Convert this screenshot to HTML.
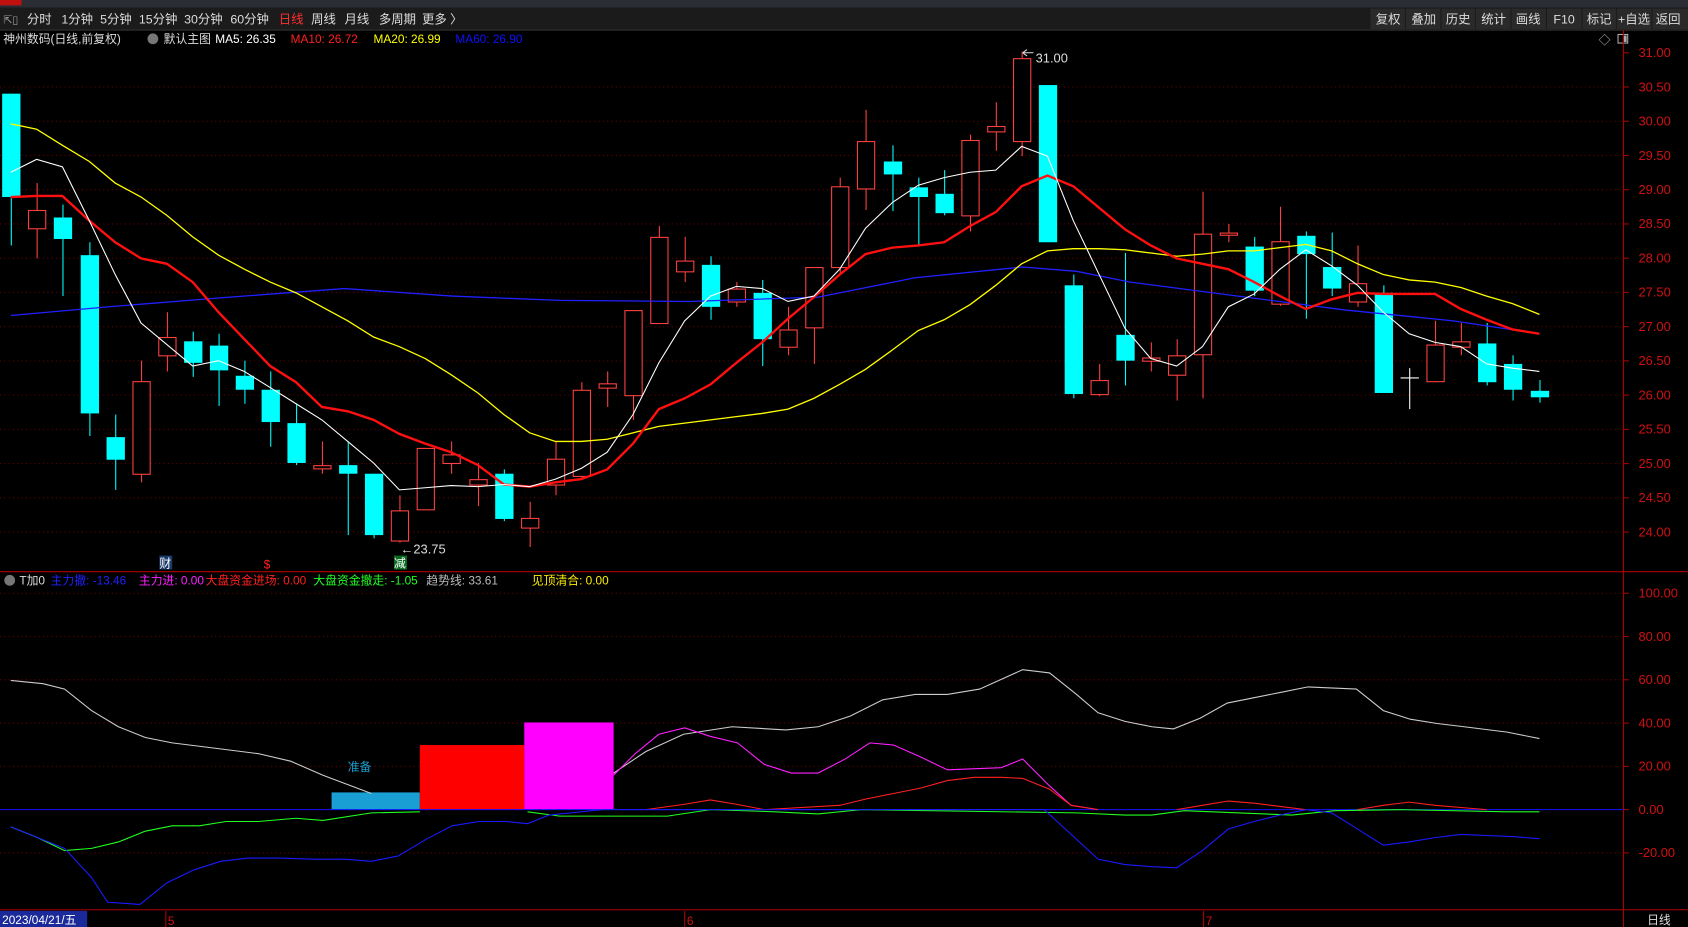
<!DOCTYPE html>
<html><head><meta charset="utf-8"><style>
html,body{margin:0;padding:0;background:#000;overflow:hidden}
svg{display:block}
text{font-family:"Liberation Sans","Noto Sans CJK SC",sans-serif}
</style></head><body>
<svg id="s" width="1688" height="927" viewBox="0 0 1568 861" preserveAspectRatio="none" xmlns="http://www.w3.org/2000/svg">
<rect width="1568" height="861" fill="#000"/>
<rect width="1568" height="7" fill="#2a2d33"/>
<rect x="0" y="0" width="20" height="5" fill="#c01010"/>
<rect y="7" width="1568" height="21" fill="#1b1b1b"/>
<line x1="0" y1="28" x2="1568" y2="28" stroke="#333" />
<g font-size="11.5" fill="#ddd">
<text x="3" y="22" fill="#999" font-size="10">⇱▯</text>
<text x="25" y="22">分时</text><text x="57" y="22">1分钟</text><text x="93" y="22">5分钟</text><text x="129" y="22">15分钟</text><text x="171" y="22">30分钟</text><text x="214" y="22">60分钟</text>
<text x="259" y="22" fill="#ff3030">日线</text><text x="289" y="22">周线</text><text x="320" y="22">月线</text><text x="352" y="22">多周期</text><text x="392" y="22">更多 〉</text>
</g>
<g font-size="11.5" fill="#ddd">
<rect x="1273" y="8" width="32" height="19" fill="#2a2a2a"/><text x="1278" y="22">复权</text>
<rect x="1306" y="8" width="32" height="19" fill="#2a2a2a"/><text x="1311" y="22">叠加</text>
<rect x="1339" y="8" width="31" height="19" fill="#2a2a2a"/><text x="1343" y="22">历史</text>
<rect x="1371" y="8" width="32" height="19" fill="#2a2a2a"/><text x="1376" y="22">统计</text>
<rect x="1404" y="8" width="32" height="19" fill="#2a2a2a"/><text x="1408" y="22">画线</text>
<rect x="1437" y="8" width="32" height="19" fill="#2a2a2a"/><text x="1443" y="22">F10</text>
<rect x="1470" y="8" width="31" height="19" fill="#2a2a2a"/><text x="1474" y="22">标记</text>
<rect x="1502" y="8" width="32" height="19" fill="#2a2a2a"/><text x="1503" y="22">+自选</text>
<rect x="1535" y="8" width="33" height="19" fill="#2a2a2a"/><text x="1538" y="22">返回</text>
</g>
<g font-size="11">
<text x="3" y="40" fill="#ddd">神州数码(日线,前复权)</text>
<circle cx="142" cy="36" r="5" fill="#777"/><text x="152" y="40" fill="#ddd">默认主图</text>
<text x="200" y="40" fill="#fff">MA5: 26.35</text>
<text x="270" y="40" fill="#ff2020">MA10: 26.72</text>
<text x="347" y="40" fill="#ffff00">MA20: 26.99</text>
<text x="423" y="40" fill="#1010ff">MA60: 26.90</text>
<text x="1485" y="41" fill="#bbb" font-size="11">◇</text>
<rect x="1503" y="32" width="9" height="8" fill="none" stroke="#aaa"/><rect x="1508" y="33" width="3" height="6" fill="#aaa"/>
</g>
<g id="grid"></g>
<line x1="1508" y1="28" x2="1508" y2="845" stroke="#b00000"/>
<line x1="0" y1="531" x2="1568" y2="531" stroke="#b00000"/>
<line x1="0" y1="845" x2="1568" y2="845" stroke="#b00000"/>
<line x1="1508" y1="845" x2="1508" y2="861" stroke="#b00000"/>
<g id="ax" font-size="12" fill="#d01010"></g>
<g id="ch"></g>
<text x="962" y="58" fill="#ddd" font-size="12">31.00</text>
<path d="M950 49 l4 -3 M950 49 l4 3 M950 49 H960" stroke="#ddd" fill="none"/>
<text x="372" y="514" fill="#ddd" font-size="12">←23.75</text>
<rect x="148" y="516" width="12" height="13" fill="#1a3a6a"/><text x="148" y="527" fill="#fff" font-size="11">财</text>
<text x="245" y="528" fill="#ff2020" font-size="11">$</text>
<rect x="366" y="516" width="12" height="13" fill="#0a6a20"/><text x="366" y="527" fill="#fff" font-size="11">减</text>
<g font-size="11">
<circle cx="9" cy="539" r="5" fill="#777"/>
<text x="18" y="543" fill="#ddd">T加0</text>
<text x="47" y="543" fill="#2020ff">主力撤: -13.46</text>
<text x="129" y="543" fill="#ff20ff">主力进: 0.00</text>
<text x="191" y="543" fill="#ff2020">大盘资金进场: 0.00</text>
<text x="291" y="543" fill="#20ff20">大盘资金撤走: -1.05</text>
<text x="396" y="543" fill="#bbb">趋势线: 33.61</text>
<text x="494" y="543" fill="#ffee00">见顶清合: 0.00</text>
</g>
<rect x="308" y="736" width="82" height="16" fill="#1a9fd4"/>
<rect x="390" y="692" width="97" height="60" fill="#ff0000"/>
<rect x="487" y="671" width="83" height="81" fill="#ff00ff"/>
<text x="323" y="716" fill="#1a9fd4" font-size="11">准备</text>
<line x1="0" y1="752" x2="1508" y2="752" stroke="#1010ff"/>
<g id="ind"></g>
<rect x="0" y="846" width="81" height="15" fill="#1a2a9a"/>
<text x="2" y="858" fill="#fff" font-size="11">2023/04/21/五</text>
<line x1="154" y1="846" x2="154" y2="861" stroke="#b00000"/><text x="156" y="859" fill="#d01010" font-size="11">5</text>
<line x1="636" y1="846" x2="636" y2="861" stroke="#b00000"/><text x="638" y="859" fill="#d01010" font-size="11">6</text>
<line x1="1118" y1="846" x2="1118" y2="861" stroke="#b00000"/><text x="1120" y="859" fill="#d01010" font-size="11">7</text>
<text x="1530" y="858" fill="#ddd" font-size="11">日线</text>
</svg>
<script>
var NS="http://www.w3.org/2000/svg";
function el(p,t,a){var e=document.createElementNS(NS,t);for(var k in a)e.setAttribute(k,a[k]);document.getElementById(p).appendChild(e);return e;}
for(var k=0;k<=14;k++){var y=49+k*31.8;var p=(31-k*0.5).toFixed(2);
 if(k>0)el('grid','line',{x1:0,y1:y,x2:1508,y2:y,stroke:'#6a0000','stroke-dasharray':'1 3'});
 el('ax','line',{x1:1508,y1:y,x2:1513,y2:y,stroke:'#b00000'});
 var t=el('ax','text',{x:1522,y:y+4});t.textContent=p;}
for(var k=0;k<=6;k++){var y=551+k*40.2;var v=(100-k*20).toFixed(2);
 el('grid','line',{x1:0,y1:y,x2:1508,y2:y,stroke:'#6a0000','stroke-dasharray':'1 3'});
 el('ax','line',{x1:1508,y1:y,x2:1513,y2:y,stroke:'#b00000'});
 var t=el('ax','text',{x:1522,y:y+4});t.textContent=v;}
var C=[[10,87,183,87,228,'c'],[34,195,212,170,240,'r'],[58,202,222,190,275,'c'],[83,237,384,225,405,'c'],[107,406,427,385,455,'c'],[131,354,440,335,448,'r'],[155,313,330,290,345,'r'],[179,317,337,308,350,'c'],[203,321,344,310,377,'c'],[227,349,362,335,375,'c'],[251,362,392,345,415,'c'],[275,393,430,375,432,'c'],[299,432,435,410,440,'r'],[323,432,440,410,497,'c'],[347,440,497,440,500,'c'],[371,474,502,460,504,'r'],[395,416,473,416,473,'r'],[419,422,430,410,440,'r'],[444,445,450,430,470,'r'],[468,440,482,436,484,'c'],[492,481,490,466,508,'r'],[516,426,450,410,460,'r'],[540,362,442,355,445,'r'],[564,356,360,345,378,'r'],[588,288,367,288,390,'r'],[612,220,300,210,300,'r'],[636,242,252,220,262,'r'],[660,246,285,238,297,'c'],[684,268,280,262,285,'r'],[708,272,315,260,340,'c'],[732,306,322,285,330,'r'],[756,248,304,248,338,'r'],[780,173,248,165,255,'r'],[804,131,175,102,195,'r'],[829,150,162,135,196,'c'],[853,174,183,165,228,'c'],[877,180,198,158,200,'c'],[901,130,200,125,215,'r'],[925,117,122,95,140,'r'],[949,54,131,48,145,'r'],[973,79,225,79,225,'c'],[997,265,366,255,370,'c'],[1021,353,366,338,368,'r'],[1045,311,335,235,358,'c'],[1069,332,335,318,345,'r'],[1093,330,348,315,372,'r'],[1117,217,329,178,370,'r'],[1141,216,218,208,225,'r'],[1165,229,270,220,275,'c'],[1189,224,282,192,284,'r'],[1213,219,236,215,296,'c'],[1237,248,268,216,275,'c'],[1261,263,280,228,285,'r'],[1285,272,365,265,365,'c'],[1309,351,352,342,380,'w'],[1333,320,354,298,355,'r'],[1357,317,322,300,330,'r'],[1381,319,355,300,358,'c'],[1405,338,362,330,372,'c'],[1430,363,369,353,374,'c']];
C.forEach(function(c){var x=c[0],col=c[5]=='c'?'#00ffff':(c[5]=='w'?'#ffffff':'#ff4040');
 el('ch','line',{x1:x+.5,y1:c[3],x2:x+.5,y2:c[4],stroke:col});
 if(c[5]=='c')el('ch','rect',{x:x-8,y:c[1],width:17,height:Math.max(1,c[2]-c[1]),fill:col});
 else if(c[5]=='w')el('ch','line',{x1:x-8,y1:c[1],x2:x+9,y2:c[1],stroke:col});
 else el('ch','rect',{x:x-7.5,y:c[1]+.5,width:16,height:Math.max(1,c[2]-c[1]),fill:'#000',stroke:col});});
function pl(g,pts,col,w){el(g,'polyline',{points:pts.map(function(p){return p.join(',')}).join(' '),fill:'none',stroke:col,'stroke-width':w});}
var xs=C.map(function(c){return c[0];});
function Z(ys){return ys.map(function(y,i){return [xs[i],y];});}
pl('ch',[[10,293],[100,285],[200,277],[320,268],[420,275],[520,279],[640,280],[760,276],[850,258],[950,248],[1000,252],[1050,262],[1150,275],[1250,288],[1350,298],[1430,310]],'#2020ff',1.2);
pl('ch',Z([115,120,135,150,170,183,200,220,237,250,262,272,285,298,313,322,333,348,365,385,402,410,410,408,402,396,393,390,387,384,380,370,357,343,325,307,297,283,265,245,233,231,231,232,235,238,236,233,233,230,227,233,245,255,260,262,267,275,282,292,303]),'#ffff00',1.2);
pl('ch',Z([183,182,182,205,225,240,245,262,290,315,340,355,378,382,390,403,412,420,432,450,452,448,445,436,412,380,370,357,337,318,296,276,255,236,230,228,225,210,197,173,163,173,193,213,228,240,245,250,262,275,287,278,272,273,273,273,287,297,306,310,320]),'#ff1010',2.2);
pl('ch',Z([160,148,155,205,255,300,320,340,335,345,360,375,390,410,430,455,453,451,452,450,452,445,435,420,385,337,298,275,266,268,280,275,250,212,188,172,165,160,158,136,145,205,255,305,333,340,322,285,273,250,232,247,265,290,310,318,322,338,342,345,345]),'#ffffff',1);
pl('ind',[[10,632],[40,635],[60,640],[85,660],[110,675],[135,685],[160,690],[200,695],[240,700],[270,707],[300,720],[345,737]],'#cccccc',1);
pl('ind',[[570,718],[600,698],[635,682],[680,675],[730,678],[760,675],[790,665],[820,650],[850,645],[880,645],[910,640],[950,622],[975,625],[1000,645],[1020,662],[1045,670],[1070,675],[1090,677],[1115,667],[1140,653],[1165,648],[1190,643],[1215,638],[1260,640],[1285,660],[1310,668],[1335,672],[1360,675],[1400,680],[1430,686]],'#cccccc',1);
pl('ind',[[570,720],[590,700],[612,682],[636,676],[660,684],[685,690],[710,710],[735,718],[760,718],[785,705],[808,690],[830,692],[855,703],[880,715],[930,713],[950,705],[975,730],[995,748],[1020,752]],'#ff20ff',1);
pl('ind',[[600,752],[636,747],[660,743],[684,747],[710,752],[780,748],[805,742],[830,737],[855,732],[880,725],[905,722],[930,722],[950,723],[975,733],[995,748],[1020,752]],'#ff2020',1);
pl('ind',[[1093,752],[1117,748],[1141,744],[1165,746],[1189,749],[1213,752]],'#ff2020',1);
pl('ind',[[1261,752],[1285,748],[1309,745],[1333,748],[1357,750],[1381,752]],'#ff2020',1);
pl('ind',[[10,768],[35,778],[60,790],[85,788],[110,782],[135,772],[160,767],[185,767],[210,763],[240,763],[275,760],[300,762],[345,755],[390,754]],'#20ff20',1);
pl('ind',[[490,754],[520,758],[620,758],[660,752],[720,754],[760,756],[800,752],[1000,755],[1045,757],[1070,757],[1100,753],[1200,757],[1240,753],[1300,752],[1400,754],[1430,754]],'#20ff20',1);
pl('ind',[[10,768],[35,778],[60,788],[85,815],[100,838],[130,840],[155,820],[180,808],[205,800],[230,797],[260,797],[290,798],[320,798],[345,800],[370,795],[395,780],[420,767],[445,763],[470,763],[490,765],[510,757],[560,752],[970,752],[995,775],[1020,798],[1045,803],[1070,805],[1093,806],[1117,790],[1141,770],[1165,763],[1189,757],[1213,752],[1237,755],[1261,770],[1285,785],[1309,782],[1333,778],[1357,775],[1381,776],[1405,777],[1430,779]],'#1a1aff',1);
</script>
</body></html>
